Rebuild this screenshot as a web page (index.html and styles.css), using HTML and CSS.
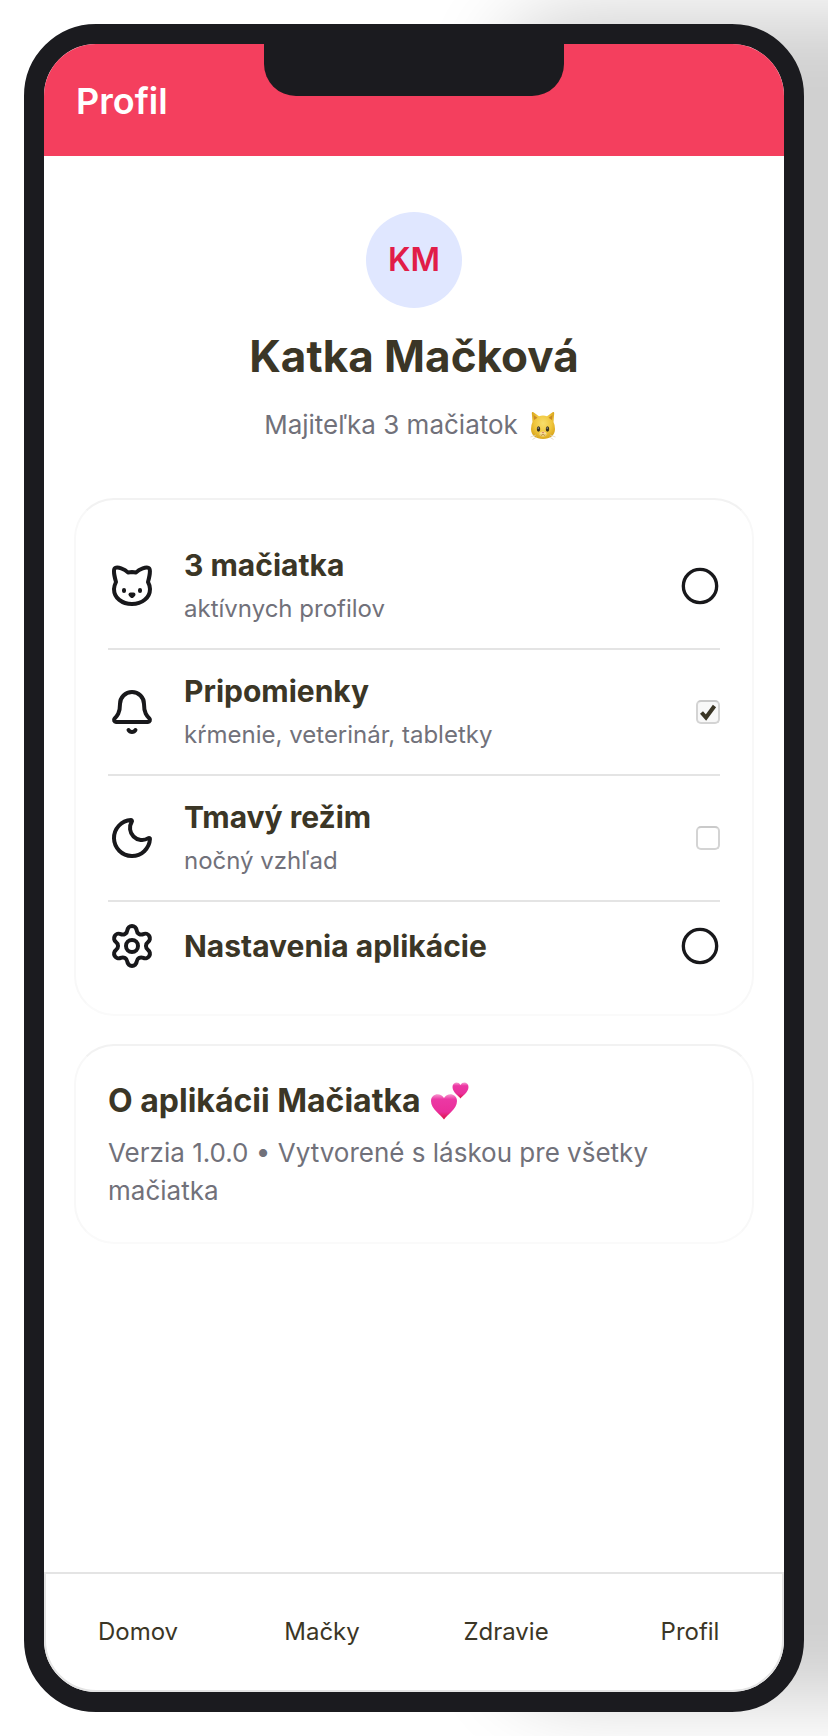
FILE: index.html
```html
<!DOCTYPE html>
<html lang="sk">
<head>
<meta charset="utf-8">
<meta name="viewport" content="width=device-width, initial-scale=1">
<title>Profil</title>
<link rel="stylesheet" href="styles.css">
</head>
<body>
<div class="phone">
  <div class="notch"></div>
  <header class="topbar"><h1 class="topbar-title">Profil</h1></header>
  <main class="content">
    <section class="profile">
      <div class="avatar">KM</div>
      <h2 class="name">Katka Mačková</h2>
      <p class="subtitle">Majiteľka 3 mačiatok
        <svg class="emoji-cat" viewBox="0 0 26 29" role="img" aria-label="mačka">
          <defs>
            <radialGradient id="fur" cx="50%" cy="42%" r="60%"><stop offset="0" stop-color="#f8de6c"/><stop offset=".6" stop-color="#f0c63c"/><stop offset="1" stop-color="#d9a51c"/></radialGradient>
          </defs>
          <path d="M2.5 11 1.8 2.2Q1.8.4 3.4 1.3L9 5.2q4-1.2 8 0l5.600-3.900q1.600-.9 1.600.9L23.500 11q1.500 3 1.500 7c0 6.500-5 10-12 10S1 24.500 1 18q0-4 1.500-7z" fill="url(#fur)"/>
          <path d="M4 9 3.500 4 7.500 6.700zM22 9l.5-5-4 2.700z" fill="#c98a25"/>
          <ellipse cx="8.500" cy="18" rx="1.700" ry="2.700" fill="#35301f"/>
          <ellipse cx="17.500" cy="18" rx="1.700" ry="2.700" fill="#35301f"/>
          <circle cx="8.200" cy="17" r=".6" fill="#fff"/><circle cx="17.200" cy="17" r=".6" fill="#fff"/>
          <ellipse cx="13" cy="23" rx="3.500" ry="2.500" fill="#f6df93"/>
          <path d="M11.700 21h2.600L13 22.600z" fill="#d3776a"/>
          <path d="M10.500 24q1.500.9 2.500-.7 1 1.600 2.500.7" fill="none" stroke="#a5711a" stroke-width=".8"/>
          <path d="M6 24 .5 26M6.500 26 2.500 28.500M20 24l5.500 2M19.500 26l4 2.500" stroke="#d8d0bc" stroke-width=".7"/>
        </svg>
      </p>
    </section>

    <section class="card card-list">
      <div class="row">
        <svg class="icon" viewBox="0 0 24 24" aria-hidden="true"><path d="M12 5c.67 0 1.35.09 2 .26 1.78-2 5.03-2.84 6.42-2.26 1.4.58-.42 7-.42 7 .57 1.07 1 2.24 1 3.44C21 17.9 16.97 21 12 21s-9-3-9-7.56c0-1.25.5-2.4 1-3.44 0 0-1.89-6.42-.5-7 1.39-.58 4.72.23 6.5 2.23A9.04 9.04 0 0 1 12 5Z"/><path d="M8 14v.5M16 14v.5M11.25 16.25h1.5L12 17l-.75-.75Z"/></svg>
        <div class="row-text"><h3 class="row-title">3 mačiatka</h3><p class="row-note">aktívnych profilov</p></div>
        <button class="row-action" type="button" aria-label="Otvoriť mačiatka"><svg class="ring" viewBox="0 0 24 24"><circle cx="12" cy="12" r="10"/></svg></button>
      </div>
      <label class="row">
        <svg class="icon" viewBox="0 0 24 24" aria-hidden="true"><path d="M10.268 21a2 2 0 0 0 3.464 0"/><path d="M3.262 15.326A1 1 0 0 0 4 17h16a1 1 0 0 0 .74-1.673C19.41 13.956 18 12.499 18 8A6 6 0 0 0 6 8c0 4.499-1.411 5.956-2.738 7.326"/></svg>
        <span class="row-text"><span class="row-title">Pripomienky</span><span class="row-note">kŕmenie, veterinár, tabletky</span></span>
        <span class="check"><input class="check-input" type="checkbox" checked><svg class="check-mark" viewBox="0 0 24 24" aria-hidden="true"><path d="M5.500 12.500 10 17.500 18.500 6"/></svg></span>
      </label>
      <label class="row">
        <svg class="icon" viewBox="0 0 24 24" aria-hidden="true"><path d="M20.985 12.486a9 9 0 1 1-9.473-9.472c.405-.022.617.46.402.803a6 6 0 0 0 8.268 8.268c.344-.215.825-.004.803.401"/></svg>
        <span class="row-text"><span class="row-title">Tmavý režim</span><span class="row-note">nočný vzhľad</span></span>
        <span class="check"><input class="check-input" type="checkbox"><svg class="check-mark" viewBox="0 0 24 24" aria-hidden="true"><path d="M5.500 12.500 10 17.500 18.500 6"/></svg></span>
      </label>
      <div class="row">
        <svg class="icon" viewBox="0 0 24 24" aria-hidden="true"><path d="M9.671 4.136a2.34 2.34 0 0 1 4.659 0 2.34 2.34 0 0 0 3.319 1.915 2.34 2.34 0 0 1 2.33 4.033 2.34 2.34 0 0 0 0 3.831 2.34 2.34 0 0 1-2.33 4.033 2.34 2.34 0 0 0-3.319 1.915 2.34 2.34 0 0 1-4.659 0 2.34 2.34 0 0 0-3.32-1.915 2.34 2.34 0 0 1-2.33-4.033 2.34 2.34 0 0 0 0-3.831A2.34 2.34 0 0 1 6.35 6.051a2.34 2.34 0 0 0 3.319-1.915"/><circle cx="12" cy="12" r="3"/></svg>
        <div class="row-text"><h3 class="row-title">Nastavenia aplikácie</h3></div>
        <button class="row-action" type="button" aria-label="Otvoriť nastavenia"><svg class="ring" viewBox="0 0 24 24"><circle cx="12" cy="12" r="10"/></svg></button>
      </div>
    </section>

    <section class="card card-about">
      <h3 class="about-title">O aplikácii Mačiatka
        <svg class="emoji-hearts" viewBox="0 0 38 38" role="img" aria-label="srdcia">
          <defs>
            <linearGradient id="heart" x1="0" y1="0" x2="0" y2="1"><stop offset="0" stop-color="#f79ad0"/><stop offset=".2" stop-color="#ec38a4"/><stop offset=".7" stop-color="#ea2f9a"/><stop offset="1" stop-color="#dc1240"/></linearGradient>
          </defs>
          <path d="M13 37.500C10 33 0 27 0 19c0-8 10-9 13-3 3-6 13-5 13 3 0 8-10 14-13 18.500z" fill="url(#heart)"/>
          <path d="M29.500 16.500C28 14 21.500 10.500 21.500 5c0-5 6-6 8-2 2-4 8-3 8 2 0 5.500-6.500 9-8 11.500z" fill="url(#heart)"/>
        </svg>
      </h3>
      <p class="about-text">Verzia 1.0.0 • Vytvorené s láskou pre všetky mačiatka</p>
    </section>
  </main>
  <nav class="tabs">
    <a class="tab" href="#domov">Domov</a>
    <a class="tab" href="#macky">Mačky</a>
    <a class="tab" href="#zdravie">Zdravie</a>
    <a class="tab" href="#profil">Profil</a>
  </nav>
</div>
</body>
</html>
```
FILE: styles.css
```css
* { box-sizing: border-box; }

body {
  margin: 0;
  padding: 24px;
  background: #fff;
  color: #3b3626;
  font-family: Inter, "Liberation Sans", sans-serif;
  overflow-x: hidden;
}

h1, h2, h3, p { margin: 0; }

.phone {
  position: relative;
  display: flex;
  flex-direction: column;
  min-height: calc(100vh - 48px);
  border: 20px solid #1b1b1f;
  border-radius: 72px;
  background: #fff;
  box-shadow: 476px -12px 80px #d0d0d0;
}

.notch {
  position: absolute;
  top: 0;
  left: 50%;
  width: 300px;
  height: 52px;
  margin-left: -150px;
  border-radius: 0 0 32px 32px;
  background: #1b1b1f;
}

.topbar {
  padding: 35px 32px 33px;
  border-radius: 52px 52px 0 0;
  background: #f43f5e;
  color: #fff;
}
.topbar-title { font-size: 36px; line-height: 44px; font-weight: 600; }

.content { flex: 1; padding: 56px 30px 32px; }

.profile {
  display: flex;
  flex-direction: column;
  align-items: center;
  margin-bottom: 54px;
}
.avatar {
  display: grid;
  place-items: center;
  width: 96px;
  height: 96px;
  margin-bottom: 20px;
  border-radius: 50%;
  background: #e0e7ff;
  color: #e11d48;
  font-size: 32px;
  font-weight: 600;
  line-height: 46px;
}
.name { font-size: 44px; line-height: 56px; font-weight: 700; }
.subtitle {
  display: flex;
  align-items: center;
  gap: 12px;
  margin-top: 22px;
  color: #71717a;
  font-size: 26px;
  line-height: 38px;
}
.emoji-cat { width: 26px; height: 29px; margin-right: 8px; }

.card {
  border: 2px solid;
  border-color: #f2f2f2 #f8f8f8 #fafafa;
  border-radius: 40px;
}
.card-list { padding: 24px 32px; }
.card-about { margin-top: 28px; padding: 32px; }

.row {
  display: flex;
  align-items: center;
  gap: 28px;
  padding: 20px 0;
}
.row + .row { border-top: 2px solid #e4e4e4; }
.icon {
  flex: none;
  width: 48px;
  height: 48px;
}
.ring { display: block; width: 40px; height: 40px; }
.icon, .ring {
  fill: none;
  stroke: #18181b;
  stroke-width: 2;
  stroke-linecap: round;
  stroke-linejoin: round;
}
.row-text {
  flex: 1;
  display: flex;
  flex-direction: column;
  gap: 4px;
}
.row-title { font-size: 30px; line-height: 42px; font-weight: 700; }
.row-note { color: #71717a; font-size: 24px; line-height: 38px; }
.row-action { padding: 0; border: 0; background: none; }

.check { display: grid; }
.check-input, .check-mark { grid-area: 1 / 1; width: 24px; height: 24px; }
.check-input {
  appearance: none;
  margin: 0;
  border: 2px solid #d4d4d4;
  border-top-color: #cacaca;
  border-radius: 5px;
  background: #fff;
}
.check-mark {
  visibility: hidden;
  fill: none;
  stroke: #3b3626;
  stroke-width: 4;
  pointer-events: none;
}
.check-input:checked { background: #f8f8f8; }
.check-input:checked + .check-mark { visibility: visible; }

.about-title {
  display: flex;
  align-items: center;
  gap: 10px;
  font-size: 32px;
  line-height: 46px;
  font-weight: 700;
}
.emoji-hearts { width: 38px; height: 38px; }
.about-text {
  margin-top: 10px;
  color: #71717a;
  font-size: 26px;
  line-height: 38px;
}

.tabs {
  display: grid;
  grid-template-columns: repeat(4, 1fr);
  height: 120px;
  border: 2px solid #e4e4e4;
  border-radius: 0 0 52px 52px;
}
.tab {
  display: grid;
  place-items: center;
  color: inherit;
  font-size: 24px;
  line-height: 36px;
  text-decoration: none;
}
```
